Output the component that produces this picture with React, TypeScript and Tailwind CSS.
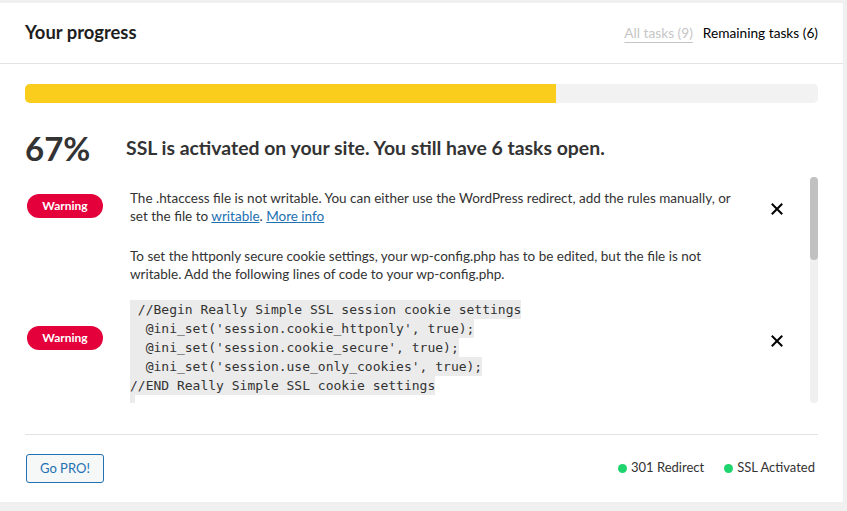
import React from "react";

const codeLines = [
  " //Begin Really Simple SSL session cookie settings",
  "  @ini_set('session.cookie_httponly', true);",
  "  @ini_set('session.cookie_secure', true);",
  "  @ini_set('session.use_only_cookies', true);",
  "//END Really Simple SSL cookie settings",
];

function Badge({ label, color = "bg-[#e4003b]" }: { label: string; color?: string }) {
  return (
    <span className={`flex h-6 w-[76px] items-center justify-center rounded-full text-[12px] font-bold text-white ${color}`}>
      {label}
    </span>
  );
}

function CloseIcon() {
  return (
    <svg width="12" height="12" viewBox="0 0 12 12" className="text-black">
      <path d="M1.5 1.5 L10.5 10.5 M10.5 1.5 L1.5 10.5" stroke="currentColor" strokeWidth="2" strokeLinecap="square" />
    </svg>
  );
}

function TaskRow({ children, badge }: { children: React.ReactNode; badge?: React.ReactNode }) {
  return (
    <div className="flex items-center pt-[12px] pb-[10px]">
      <div className="w-[105px] shrink-0 pl-[2px] pb-[3px]">{badge ?? <Badge label="Warning" />}</div>
      <div className="w-[620px] shrink-0 text-[13.5px] leading-[18px] text-[#333]">{children}</div>
      <div className="ml-[21px] mt-[3px] flex w-[12px] justify-center">
        <CloseIcon />
      </div>
    </div>
  );
}

export default function App() {
  return (
    <div className="h-[511px] w-[847px] bg-[#f0f0f0] pt-[3px]" style={{ fontFamily: "Lato, 'Liberation Sans', sans-serif" }}>
      <div className="flex h-[499px] w-[843px] flex-col bg-white">
        {/* header */}
        <div className="flex h-[61px] shrink-0 items-center justify-between border-b border-[#e3e3e3] pl-[25px] pr-[25px]">
          <h2 className="text-[18.4px] font-bold text-[#1e1e1e]">Your progress</h2>
          <div className="flex items-center gap-[10px] text-[13.7px]">
            <span className="text-[#c6c6c6] underline decoration-[#c6c6c6] underline-offset-[4px]">All tasks (9)</span>
            <span className="text-black">Remaining tasks (6)</span>
          </div>
        </div>

        {/* progress bar */}
        <div className="mx-[25px] mt-[20px] h-[19px] shrink-0 overflow-hidden rounded-[5px] bg-[#f2f2f2]">
          <div className="h-full w-[67%] bg-[#facd1c]" />
        </div>

        <div className="mx-[25px] mt-[24px] flex h-[42px] shrink-0 items-center">
          <span className="w-[101px] text-[33px] font-bold leading-none text-[#333]">67%</span>
          <span className="text-[19.4px] font-bold text-[#333]">SSL is activated on your site. You still have 6 tasks open.</span>
        </div>

        {/* task list with scrollbar */}
        <div className="ml-[25px] mr-[25px] mt-[8px] flex h-[226px] shrink-0">
          <div className="min-w-0 flex-1 overflow-hidden">
            <TaskRow>
              <p>
                The .htaccess file is not writable. You can either use the WordPress redirect, add the rules manually, or set the file to{" "}
                <a className="text-[#2271b1] underline">writable</a>. <a className="text-[#2271b1] underline">More info</a>
              </p>
            </TaskRow>
            <TaskRow>
              <div className="pb-[27px]">
                <p>
                  To set the httponly secure cookie settings, your wp-config.php has to be edited, but the file is not writable. Add the
                  following lines of code to your wp-config.php.
                </p>
                <div className="mt-[17px] text-[13px] leading-[19px] text-[#333]" style={{ fontFamily: "'DejaVu Sans Mono', monospace" }}>
                  {codeLines.map((l, i) => (
                    <div key={i} className="w-fit whitespace-pre bg-[#ebebeb]">
                      {l}
                    </div>
                  ))}
                  <div className="h-[9px] w-[5px] bg-[#ebebeb]" />
                </div>
              </div>
            </TaskRow>
            <TaskRow badge={<Badge label="Open" color="bg-[#f8be2e]" />}>
              <p>
                Your site is not protected by HTTP Strict Transport Security (HSTS). Enable HSTS to force browsers to always load your
                site over HTTPS. <a className="text-[#2271b1] underline">More info</a>
              </p>
            </TaskRow>
          </div>
          <div className="flex w-[8px] shrink-0 flex-col rounded-full bg-[#f0f0f0]">
            <div className="h-[83px] rounded-full bg-[#c1c1c1]" />
          </div>
        </div>

        {/* footer */}
        <div className="mx-[25px] mt-[31px] shrink-0 border-t border-[#e3e3e3]" />
        <div className="ml-[25px] mr-[28px] mt-[19px] flex items-center justify-between">
          <button className="ml-[1px] h-[29px] rounded-[3px] border border-[#2271b1] bg-[#f6f7f7] px-[13px] text-[13px] leading-[17px] text-[#2271b1]">
            Go PRO!
          </button>
          <div className="-mt-[1px] flex items-center gap-[20px] text-[13px] text-[#333]">
            <span className="flex items-center gap-[4px]">
              <span className="h-[9px] w-[9px] rounded-full bg-[#1ed46c]" />
              301 Redirect
            </span>
            <span className="flex items-center gap-[4px]">
              <span className="h-[9px] w-[9px] rounded-full bg-[#1ed46c]" />
              SSL Activated
            </span>
          </div>
        </div>
      </div>
    </div>
  );
}
